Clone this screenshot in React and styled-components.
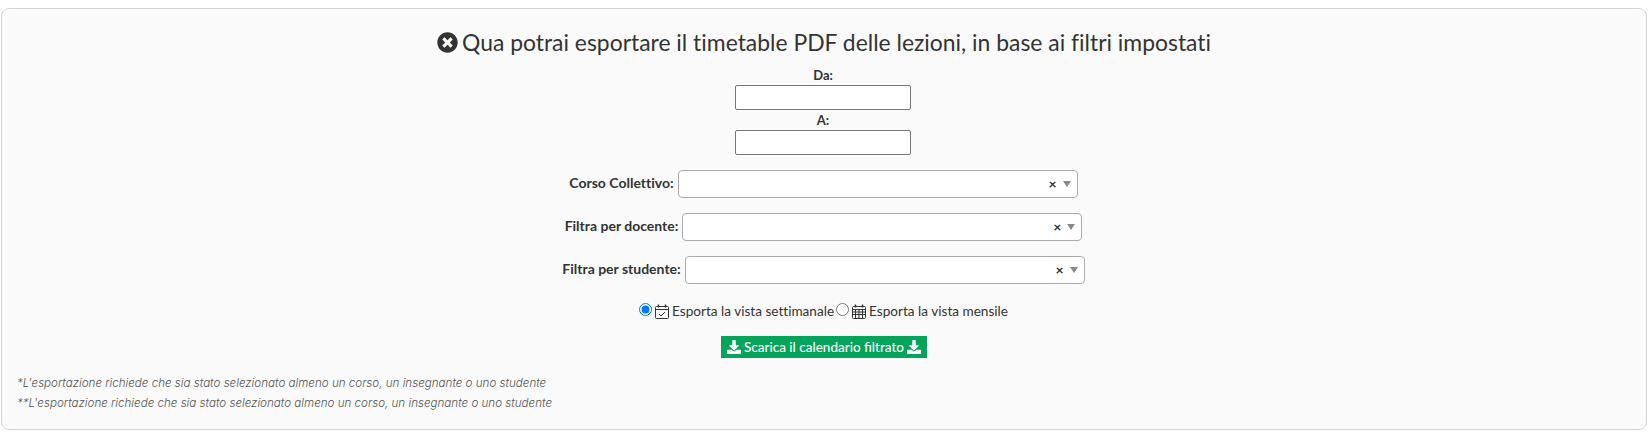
import React from "react";
import styled, { createGlobalStyle } from "styled-components";

const Global = createGlobalStyle`
  html, body { margin: 0; padding: 0; background: #fff; }
  body { font-family: "Lato", sans-serif; color: #333; font-variant-ligatures: none; }
`;
const Page = styled.div`padding: 8px 4px 4px 1px; height: 434px; box-sizing: border-box;`;
const Panel = styled.section`
  box-sizing: border-box; height: 422px; background: #fafafa; border: 1px solid #d3d3d3; border-radius: 8px;
  padding: 17px 15px 0; display: flex; flex-direction: column; align-items: center;
`;
const Title = styled.h2`
  margin: 0 0 9px; font-weight: 400; font-size: 22.9px; line-height: 32px; color: #333;
  display: flex; align-items: center; gap: 4px; font-family: "Lato", sans-serif; white-space: nowrap;
`;
const DateField = styled.div`display: flex; flex-direction: column; align-items: center; margin-left: -2px; & + & { margin-top: 2px; }`;
const FieldLabel = styled.label`font-size: 13px; font-weight: 700; line-height: 17px; padding-bottom: 1px; color: #333;`;
const DateInput = styled.input`
  box-sizing: border-box; width: 176px; height: 25px; background: #fff; border: 1px solid #767676; border-radius: 2px; padding: 0;
`;
const SelectRow = styled.div`display: flex; align-items: center; gap: 4px; height: 28px; margin-top: 15px; margin-left: -1px; &:first-of-type { margin-top: 14px; }`;
const RowLabel = styled.label`font-size: 14px; font-weight: 700; color: #333; white-space: nowrap; margin-top: -4px;`;
const SelectBox = styled.div`
  box-sizing: border-box; width: 400px; height: 28px; background: #fff; border: 1px solid #aaa; border-radius: 4px;
  display: flex; align-items: center; justify-content: flex-end; gap: 6px; padding-right: 6px;
`;
const Clear = styled.span`font-size: 14px; font-weight: 700; color: #333; line-height: 1;`;
const Caret = styled.span`width: 0; height: 0; border-left: 4.5px solid transparent; border-right: 4.5px solid transparent; border-top: 6px solid #888;`;
const RadioRow = styled.div`display: flex; align-items: center; margin-top: 16px; height: 22px; font-size: 13.6px; color: #333; white-space: nowrap; margin-left: 1px;`;
const Radio = styled.input`margin: 0 3px 3px 0; width: 13px; height: 13px;`;
const RadioText = styled.span`margin: 0 2px 0 3px;`;
const Download = styled.button`
  margin-top: 14px; height: 22px; width: 206px; border: none; background: #04a45a; color: #fff; font: 500 13.5px "Lato", sans-serif;
  display: flex; align-items: center; justify-content: center; gap: 3px; padding: 0; white-space: nowrap;
`;
const Notes = styled.div`align-self: stretch; margin-top: 15px;`;
const Note = styled.p`margin: 0; font: italic 300 11.6px/20px "Inter", sans-serif; color: #555;`;

const XCircle = () => (
  <svg width="21" height="21" viewBox="0 0 512 512"><path fill="#333" d="M256 8C119 8 8 119 8 256s111 248 248 248 248-111 248-248S393 8 256 8zm121.600 313.100c4.700 4.700 4.700 12.300 0 17L338 377.600c-4.700 4.700-12.300 4.700-17 0L256 312l-65.100 65.600c-4.700 4.700-12.300 4.700-17 0L134.400 338c-4.700-4.700-4.700-12.300 0-17l65.600-65-65.600-65.100c-4.700-4.700-4.700-12.300 0-17l39.600-39.600c4.700-4.700 12.300-4.700 17 0l65 65.700 65.100-65.600c4.700-4.700 12.300-4.700 17 0l39.600 39.600c4.700 4.700 4.700 12.300 0 17L312 256l65.600 65.100z"/></svg>
);
const Cal = ({ week }) => (
  <svg width="14" height="15" viewBox="0 0 14 15" fill="none" stroke="#333">
    <rect x="0.5" y="2.5" width="13" height="12" rx="1" />
    <path d="M3.500 0.500v3M10.500 0.500v3" strokeWidth="1.500" />
    <path d="M0.500 5.500h13" />
    {week ? <path d="M4 10l2 2 4-4" /> : <path d="M0.500 8h13M0.500 10.500h13M3.500 5.500v9M7 5.500v9M10.500 5.500v9" />}
  </svg>
);
const Dl = () => (
  <svg width="14" height="14" viewBox="0 0 512 512"><path fill="#fff" d="M216 0h80c13.300 0 24 10.700 24 24v168h87.700c17.800 0 26.700 21.500 14.100 34.100L269.700 378.300c-7.500 7.500-19.800 7.500-27.300 0L90.100 226.100c-12.600-12.600-3.700-34.100 14.100-34.100H192V24c0-13.300 10.700-24 24-24zm296 376v112c0 13.300-10.700 24-24 24H24c-13.300 0-24-10.700-24-24V376c0-13.300 10.700-24 24-24h146.700l49 49c20.100 20.100 52.500 20.100 72.600 0l49-49H488c13.300 0 24 10.700 24 24z"/></svg>
);

const Row = ({ label }) => (
  <SelectRow>
    <RowLabel>{label}</RowLabel>
    <SelectBox><Clear>×</Clear><Caret /></SelectBox>
  </SelectRow>
);

export default function App() {
  return (
    <Page>
      <Global />
      <Panel>
        <Title><XCircle />Qua potrai esportare il timetable PDF delle lezioni, in base ai filtri impostati</Title>
        <DateField><FieldLabel>Da:</FieldLabel><DateInput /></DateField>
        <DateField><FieldLabel>A:</FieldLabel><DateInput /></DateField>
        <Row label="Corso Collettivo:" />
        <Row label="Filtra per docente:" />
        <Row label="Filtra per studente:" />
        <RadioRow>
          <Radio type="radio" name="vista" defaultChecked /><Cal week /><RadioText>Esporta la vista settimanale</RadioText>
          <Radio type="radio" name="vista" /><Cal /><RadioText>Esporta la vista mensile</RadioText>
        </RadioRow>
        <Download><Dl />Scarica il calendario filtrato<Dl /></Download>
        <Notes>
          <Note>*L'esportazione richiede che sia stato selezionato almeno un corso, un insegnante o uno studente</Note>
          <Note>**L'esportazione richiede che sia stato selezionato almeno un corso, un insegnante o uno studente</Note>
        </Notes>
      </Panel>
    </Page>
  );
}
